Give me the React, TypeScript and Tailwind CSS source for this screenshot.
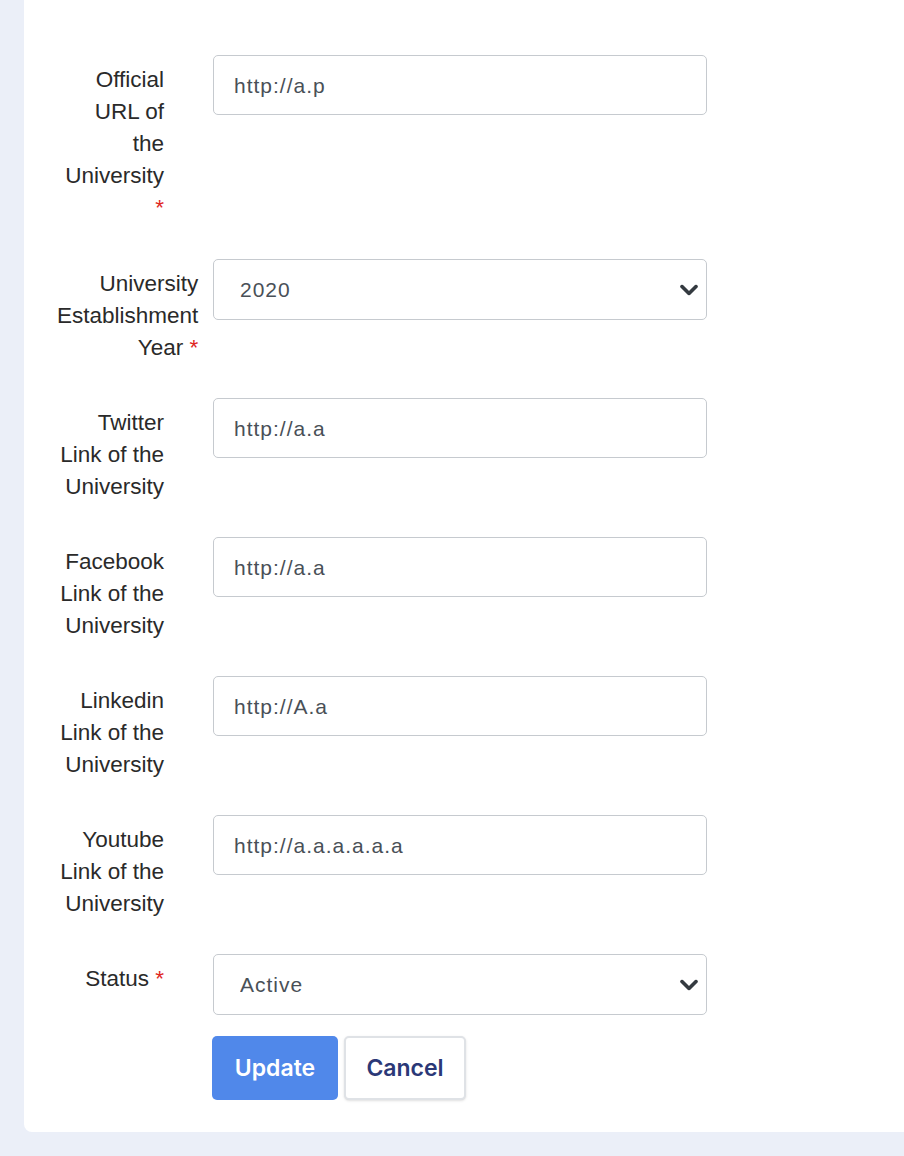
import React from 'react';

const label = 'font-["Liberation_Sans",Arial,sans-serif] text-[22.5px] leading-8 text-[#2a2a2a]';
const field =
    'w-full h-[60px] bg-white border border-[#c6cacf] rounded-[5px] font-["Liberation_Sans",Arial,sans-serif] text-[21px] tracking-[1px] text-[#495057] outline-none';

const Star = () => <span className="text-[#e0271f]">*</span>;

const Row: React.FC<{ lines: React.ReactNode[]; children: React.ReactNode; gap: string }> = ({ lines, children, gap }) => (
    <div className={`flex items-start ${gap}`}>
        <div className={`w-[107px] ml-[33px] shrink-0 text-right pt-[9px] pb-[9px] ${label}`}>
            <label className="inline-block align-top text-right">
                {lines.map((l, i) => (
                    <React.Fragment key={i}>
                        {i > 0 && <br />}
                        {l}
                    </React.Fragment>
                ))}
            </label>
        </div>
        <div className="ml-[49px] w-[494px] shrink-0">{children}</div>
    </div>
);

const Select: React.FC<{ value: string; options: string[] }> = ({ value, options }) => (
    <div className="relative">
        <select defaultValue={value} className={`${field} h-[61px] appearance-none pl-[26px] pr-12`}>
            {options.map((o) => (
                <option key={o}>{o}</option>
            ))}
        </select>
        <svg
            className="absolute right-[9px] top-1/2 -translate-y-1/2 pointer-events-none"
            width="18"
            height="11"
            viewBox="0 0 18 11"
            fill="none"
        >
            <path d="M2 2l7 7 7-7" stroke="#343a40" strokeWidth="3.6" strokeLinecap="round" strokeLinejoin="round" />
        </svg>
    </div>
);

export default function App() {
    return (
        <div className="min-h-screen bg-[#ebeff8] pl-6 pb-6">
            <div className="bg-white rounded-bl-lg pt-[55px] pb-8">
                <Row gap="mb-[26px]" lines={['Official', 'URL of', 'the', 'University', <Star key="s" />]}>
                    <input className={`${field} px-5 pt-[2px]`} defaultValue="http://a.p" />
                </Row>
                <Row gap="mb-[25px]" lines={['University', 'Establishment', <span key="y">Year <Star /></span>]}>
                    <Select value="2020" options={['2018', '2019', '2020', '2021']} />
                </Row>
                <Row gap="mb-[25px]" lines={['Twitter', 'Link of the', 'University']}>
                    <input className={`${field} px-5 pt-[2px]`} defaultValue="http://a.a" />
                </Row>
                <Row gap="mb-[25px]" lines={['Facebook', 'Link of the', 'University']}>
                    <input className={`${field} px-5 pt-[2px]`} defaultValue="http://a.a" />
                </Row>
                <Row gap="mb-[25px]" lines={['Linkedin', 'Link of the', 'University']}>
                    <input className={`${field} px-5 pt-[2px]`} defaultValue="http://A.a" />
                </Row>
                <Row gap="mb-[25px]" lines={['Youtube', 'Link of the', 'University']}>
                    <input className={`${field} px-5 pt-[2px]`} defaultValue="http://a.a.a.a.a.a" />
                </Row>
                <Row gap="mb-[21px]" lines={[<span key="st">Status <Star /></span>]}>
                    <Select value="Active" options={['Active', 'Inactive']} />
                </Row>
                <div className="flex gap-[6px] ml-[188px]">
                    <button className="w-[126px] h-16 rounded-[5px] bg-[#5088ea] text-white font-['Inter',sans-serif] font-semibold text-[23px]">
                        Update
                    </button>
                    <button className="w-[122px] h-16 rounded-[5px] bg-white border-2 border-[#dfe2e6] shadow-sm text-[#2b3877] font-['Inter',sans-serif] font-semibold text-[23px]">
                        Cancel
                    </button>
                </div>
            </div>
        </div>
    );
}
